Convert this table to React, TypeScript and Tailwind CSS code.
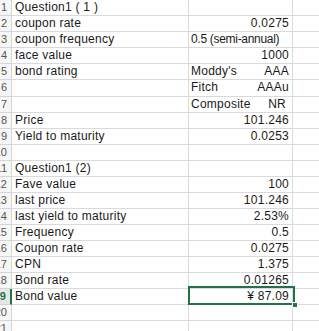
import React from "react";

type Row = {
  n: number;
  label?: string;
  value?: string;
  left?: string;
  right?: string;
  h?: string;
};

const rows: Row[] = [
  { n: 1, label: "Question1 ( 1 )" },
  { n: 2, label: "coupon rate", value: "0.0275" },
  { n: 3, label: "coupon frequency", left: "0.5 (semi-annual)" },
  { n: 4, label: "face value", value: "1000" },
  { n: 5, label: "bond rating", left: "Moddy's", right: "AAA" },
  { n: 6, left: "Fitch", right: "AAAu", h: "h-[17px]" },
  { n: 7, left: "Composite", right: "NR" },
  { n: 8, label: "Price", value: "101.246" },
  { n: 9, label: "Yield to maturity", value: "0.0253" },
  { n: 10 },
  { n: 11, label: "Question1 (2)" },
  { n: 12, label: "Fave value", value: "100" },
  { n: 13, label: "last price", value: "101.246" },
  { n: 14, label: "last yield to maturity", value: "2.53%" },
  { n: 15, label: "Frequency", value: "0.5" },
  { n: 16, label: "Coupon rate", value: "0.0275" },
  { n: 17, label: "CPN", value: "1.375" },
  { n: 18, label: "Bond rate", value: "0.01265" },
  { n: 19, label: "Bond value", value: "¥ 87.09" },
  { n: 20 },
  { n: 21 },
];

export default function App() {
  return (
    <div
      className="relative w-[319px] h-[331px] overflow-hidden bg-white text-[12px] tracking-[0.25px] text-[#1a1a1a]"
      style={{ fontFamily: '"Liberation Sans", "Noto Sans CJK SC", sans-serif' }}
    >
      {rows.map((r) => {
        const active = r.n === 19;
        return (
          <div key={r.n} className={`flex ${r.h ?? "h-[16px]"} leading-[15px]`}>
            <div
              className={`w-[12px] shrink-0 flex justify-end overflow-hidden whitespace-nowrap pr-[4px] border-b border-r border-[#d5d5d5] text-[11px] tracking-normal ${
                active ? "bg-[#e6e6e6] text-[#217346] font-bold border-r-2 border-r-[#217346]" : "bg-[#f6f6f6] text-[#555]"
              }`}
            >
              {r.n}
            </div>
            <div className="w-[177px] shrink-0 pl-[3px] whitespace-nowrap border-b border-r border-[#dadada]">
              {r.label}
            </div>
            <div className="w-[104px] shrink-0 flex justify-between pl-[2px] pr-[3px] whitespace-nowrap border-b border-r border-[#dadada]">
              {r.left ? <span className={r.n === 3 ? "tracking-[-0.3px]" : ""}>{r.left}</span> : <span />}
              {r.value && <span>{r.value}</span>}
              {r.right && <span className={r.n === 7 ? "pr-[3px]" : ""}>{r.right}</span>}
            </div>
            <div className="flex-1 border-b border-[#dadada]" />
          </div>
        );
      })}
      {/* selected cell */}
      <div className="absolute left-[188px] top-[286px] w-[107px] h-[19px] border-2 border-[#217346]" />
      <div className="absolute left-[292px] top-[302px] w-[6px] h-[6px] bg-[#217346] border border-white" />
    </div>
  );
}
